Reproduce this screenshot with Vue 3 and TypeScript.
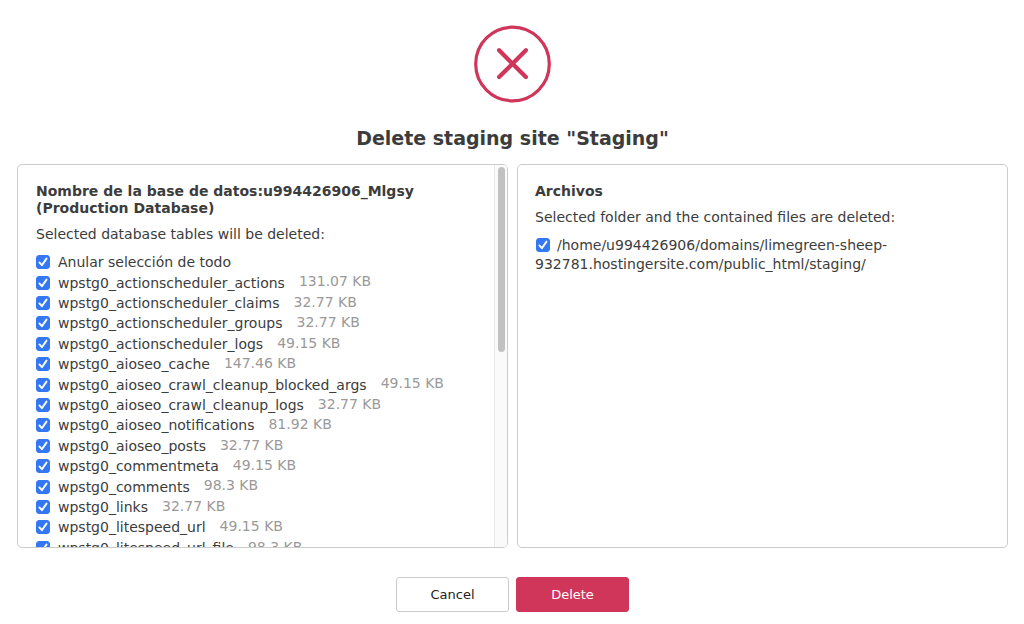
<script setup lang="ts">
import { computed, ref } from 'vue'

interface DbTable {
  name: string
  size: string
  selected: boolean
}

const table = (name: string, size: string): DbTable => ({ name: `wpstg0_${name}`, size, selected: true })

const tables = ref<DbTable[]>([
  table('actionscheduler_actions', '131.07 KB'),
  table('actionscheduler_claims', '32.77 KB'),
  table('actionscheduler_groups', '32.77 KB'),
  table('actionscheduler_logs', '49.15 KB'),
  table('aioseo_cache', '147.46 KB'),
  table('aioseo_crawl_cleanup_blocked_args', '49.15 KB'),
  table('aioseo_crawl_cleanup_logs', '32.77 KB'),
  table('aioseo_notifications', '81.92 KB'),
  table('aioseo_posts', '32.77 KB'),
  table('commentmeta', '49.15 KB'),
  table('comments', '98.3 KB'),
  table('links', '32.77 KB'),
  table('litespeed_url', '49.15 KB'),
  table('litespeed_url_file', '98.3 KB'),
])

const allSelected = computed({
  get: () => tables.value.every((t) => t.selected),
  set: (value: boolean) => tables.value.forEach((t) => (t.selected = value)),
})

const deleteFolder = ref(true)
</script>

<template>
  <main class="dialog">
    <svg class="icon" viewBox="0 0 78 78" aria-hidden="true">
      <circle cx="38.5" cy="39" r="36.8" />
      <path class="cross" d="M25.1 25.3 51.9 52.1M51.9 25.3 25.1 52.1" />
    </svg>
    <h1>Delete staging site "Staging"</h1>

    <div class="panels">
      <section class="panel">
        <div class="content tables">
          <h2>Nombre de la base de datos:u994426906_Mlgsy (Production Database)</h2>
          <p>Selected database tables will be deleted:</p>
          <ul>
            <li>
              <label><input v-model="allSelected" type="checkbox" /><span>Anular selección de todo</span></label>
            </li>
            <li v-for="t in tables" :key="t.name">
              <label><input v-model="t.selected" type="checkbox" /><span>{{ t.name }}</span></label>
              <span class="size">{{ t.size }}</span>
            </li>
          </ul>
        </div>
        <div class="track" aria-hidden="true"><div class="thumb"></div></div>
      </section>

      <section class="panel">
        <div class="content">
          <h2>Archivos</h2>
          <p>Selected folder and the contained files are deleted:</p>
          <label class="folder"><input v-model="deleteFolder" type="checkbox" />/home/u994426906/domains/limegreen-sheep-932781.hostingersite.com/public_html/staging/</label>
        </div>
      </section>
    </div>

    <footer>
      <button type="button">Cancel</button>
      <button type="button" class="danger">Delete</button>
    </footer>
  </main>
</template>

<style>
body {
  margin: 0;
  background: #fff;
}
</style>

<style scoped>
.dialog {
  box-sizing: border-box;
  display: flex;
  flex-direction: column;
  height: 100vh;
  padding: 25px 16px 12px 17px;
  color: #3c3c3c;
  font: 14px/18px Verdana, "DejaVu Sans", sans-serif;
}

.icon {
  align-self: center;
  flex: none;
  width: 78px;
  fill: none;
  stroke: #cf3659;
  stroke-width: 3.2;
}

.cross {
  stroke-width: 4.2;
  stroke-linecap: round;
}

h1 {
  margin: 23px 0 13px;
  font-size: 19px;
  line-height: 25px;
  text-align: center;
}

.panels {
  flex: 1;
  display: grid;
  grid-template-columns: 1fr 1fr;
  gap: 9px;
  min-height: 0;
}

.panel {
  display: flex;
  min-width: 0;
  overflow: hidden;
  border: 1px solid #ccc;
  border-radius: 5px;
}

.content {
  flex: 1;
  min-width: 0;
  padding: 18px 17px 0;
}

.tables {
  padding-left: 18px;
}

h2 {
  margin: 0;
  font-size: 14px;
  line-height: 17px;
}

p {
  margin: 8px 0 10px;
}

.tables p {
  margin-bottom: 9px;
}

ul {
  display: grid;
  grid-auto-rows: 1fr;
  height: 306px;
  margin: 0;
  padding: 0;
  list-style: none;
}

li {
  display: flex;
  gap: 14px;
  white-space: nowrap;
}

li label {
  display: flex;
  align-items: center;
  gap: 8px;
}

.size {
  color: #999;
}

input {
  appearance: none;
  flex: none;
  width: 14px;
  height: 14px;
  margin: 0;
  border: 1px solid #8a8a8a;
  border-radius: 3px;
}

input:checked {
  border-color: #3377f4;
  background: #3377f4 url("data:image/svg+xml,%3Csvg xmlns='http://www.w3.org/2000/svg' viewBox='0 0 12 12'%3E%3Cpath d='M2.4 6.4 4.9 9.2 9.5 2.6' fill='none' stroke='white' stroke-width='1.9' stroke-linecap='round' stroke-linejoin='round'/%3E%3C/svg%3E") center / 12px;
}

.folder {
  display: block;
  max-width: 400px;
  line-height: 19px;
}

.folder input {
  margin: 0 7px 0 1px;
  vertical-align: -2px;
}

.track {
  flex: none;
  box-sizing: border-box;
  width: 13px;
  padding: 2px 2px 2px 3px;
  border-left: 1px solid #e8e8e8;
  background: #fafafa;
}

.thumb {
  height: 49%;
  border-radius: 4px;
  background: #c1c1c1;
}

footer {
  display: flex;
  justify-content: center;
  gap: 7px;
  margin-top: 29px;
}

button {
  width: 113px;
  height: 35px;
  padding: 0;
  border: 1px solid #ccc;
  border-radius: 3px;
  background: #fff;
  color: #222;
  font: inherit;
  font-size: 13px;
}

.danger {
  border-color: #cf3659;
  background: #cf3659;
  color: #fff;
}
</style>
